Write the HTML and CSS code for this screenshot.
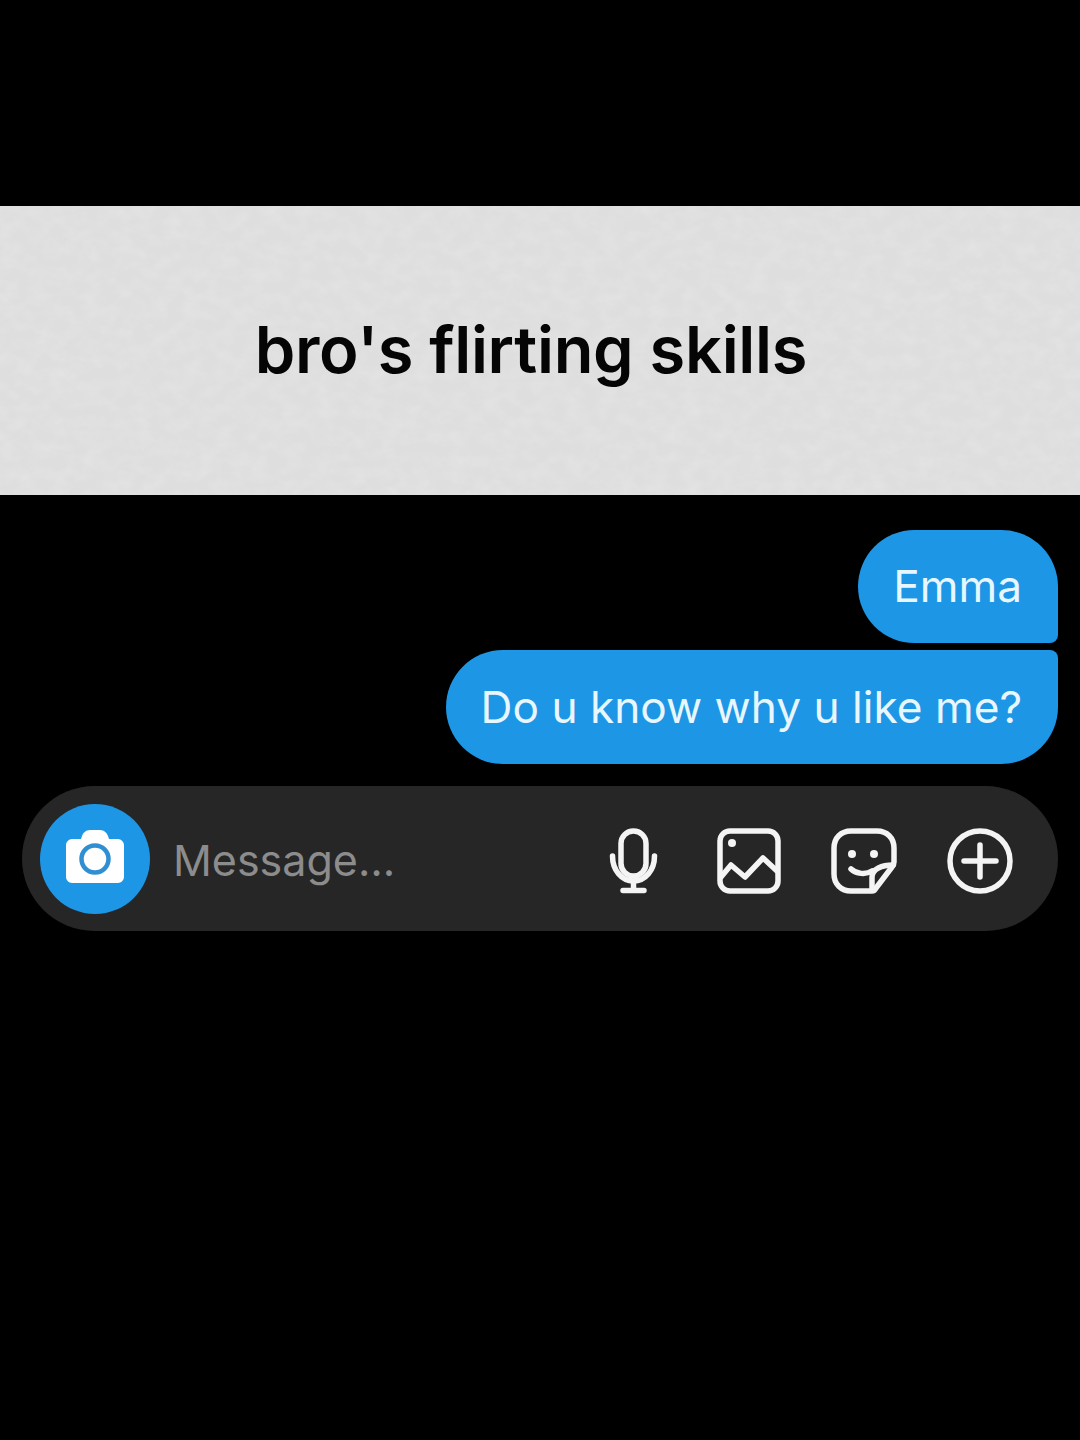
FILE: index.html
```html
<!DOCTYPE html>
<html lang="en">
<head>
    <meta charset="UTF-8">
    <meta name="viewport" content="width=device-width, initial-scale=1.0">
    <title>bro's flirting skills</title>
    <link rel="stylesheet" href="styles.css">
</head>
<body>
    <div class="caption">
        <!-- paper grain behind the caption -->
        <svg class="paper" width="1080" height="289" aria-hidden="true">
            <filter id="grain" x="0" y="0" width="100%" height="100%">
                <feTurbulence type="fractalNoise" baseFrequency="0.06 0.08" numOctaves="4" seed="7"/>
                <feColorMatrix type="matrix" values="0 0 0 0 1  0 0 0 0 1  0 0 0 0 1  0.28 0 0 0 -0.1"/>
            </filter>
            <rect width="1080" height="289" filter="url(#grain)"/>
        </svg>
        <h1>bro's flirting skills</h1>
    </div>

    <div class="chat">
        <div class="bubble first">Emma</div>
        <div class="bubble last">Do u know why u like me?</div>
    </div>

    <div class="composer">
        <div class="camera">
            <svg class="camera-icon" width="58" height="53" viewBox="0 0 58 53">
                <path fill="#fff" d="M6 9h9l1-3c1-3 4-6 8-6h10c4 0 7 3 8 6l1 3h9c3 0 6 3 6 6v32c0 3-3 6-6 6H6c-3 0-6-3-6-6V15c0-3 3-6 6-6z"/>
                <circle cx="29" cy="29" r="13.500" fill="none" stroke="#2f8fd2" stroke-width="4.500"/>
            </svg>
        </div>
        <span class="placeholder">Message…</span>
        <div class="tools">
            <svg class="tool mic" width="52" height="66" viewBox="0 0 52 66">
                <rect x="13" y="3" width="25" height="45" rx="12.500"/>
                <path d="M4.500 28c0 14 9 25 21 25s21-11 21-25"/>
                <path d="M25.500 53v9M15 62.500h21"/>
            </svg>
            <svg class="tool" width="66" height="66" viewBox="0 0 66 66">
                <rect x="5" y="3" width="58" height="60" rx="10"/>
                <circle cx="17" cy="15" r="4" class="dot"/>
                <path d="M6 49l10-12 14 12 18-19 14 13"/>
            </svg>
            <svg class="tool" width="66" height="66" viewBox="0 0 66 66">
                <path d="M41 63H20C10 63 3 56 3 46V20C3 10 10 3 20 3h26c10 0 17 7 17 17v14c0 2-1 4-2 5L45 60c-1 2-2 3-4 3z"/>
                <path d="M62 37c-11 0-21 4-21 12v13"/>
                <path d="M20 41c5 5 15 6 21 2"/>
                <circle cx="21" cy="26" r="4" class="dot"/>
                <circle cx="43" cy="26" r="4" class="dot"/>
            </svg>
            <svg class="tool" width="66" height="66" viewBox="0 0 66 66">
                <circle cx="33" cy="33" r="30"/>
                <path d="M33 17v32M17 33h32"/>
            </svg>
        </div>
    </div>
</body>
</html>
```

FILE: styles.css
```css
body { margin: 0; background: #000; font-family: Inter, "Liberation Sans", sans-serif; width: 1080px; height: 1440px; overflow: hidden; }

.caption { position: relative; margin-top: 206px; height: 289px; background: #dedede; display: flex; align-items: center; justify-content: center; }
.caption .paper { position: absolute; left: 0; top: 0; }
.caption h1 { position: relative; margin: 0 0 3px -18px; font-size: 65px; font-weight: 600; color: #050505; letter-spacing: -0.3px; }

.chat { display: flex; flex-direction: column; align-items: flex-end; gap: 7px; padding: 35px 22px 0 0; }
.bubble { box-sizing: border-box; height: 114px; padding: 0 36px 1px 35px; display: flex; align-items: center; background: #1d96e5; color: #e8f7ff; font-size: 44.200px; border-radius: 57px; }
.bubble.first { height: 113px; border-bottom-right-radius: 8px; }
.bubble.last { border-top-right-radius: 8px; }

.composer { box-sizing: border-box; width: 1036px; height: 145px; margin: 22px 0 0 22px; padding: 0 45px 0 18px; display: flex; align-items: center; background: #262626; border-radius: 73px; }
.camera { width: 110px; height: 110px; border-radius: 50%; background: #1d96e5; display: flex; align-items: center; justify-content: center; flex-shrink: 0; }
.camera-icon { margin: 0 0 4px 0; }
.placeholder { margin: 3px 0 0 23px; font-size: 43px; color: #8c8c8c; }

.tools { margin: 4px 0 0 auto; display: flex; align-items: center; gap: 50px; }
.tool { fill: none; stroke: #f4f4f4; stroke-width: 5.500; stroke-linecap: round; stroke-linejoin: round; }
.tool .dot { fill: #f4f4f4; stroke: none; }
.tool.mic { margin-right: 5px; }
```
